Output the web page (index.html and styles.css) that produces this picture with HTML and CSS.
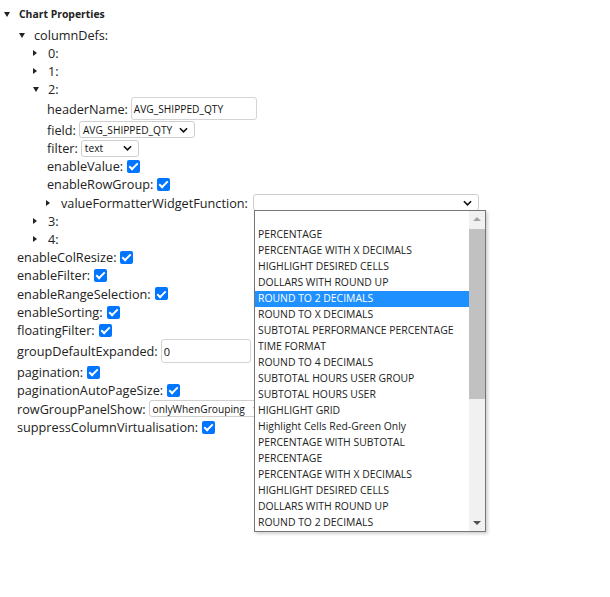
FILE: index.html
```html
<!DOCTYPE html>
<html>
<head>
<meta charset="utf-8">
<link rel="stylesheet" href="styles.css">
</head>
<body>
<div class="tree">
  <div class="row header l0"><span class="tri down"></span><span class="title">Chart Properties</span></div>
  <div class="row gap l1"><span class="tri down"></span>columnDefs:</div>
  <div class="row l2"><span class="tri right"></span>0:</div>
  <div class="row l2"><span class="tri right"></span>1:</div>
  <div class="row l2"><span class="tri down"></span>2:</div>
  <div class="row tall l3">headerName:<span class="input w-header">AVG_SHIPPED_QTY</span></div>
  <div class="row sel l3">field:<span class="select w-field"><span>AVG_SHIPPED_QTY</span><svg class="chev" viewBox="0 0 10 6"><path d="M1 1l4 4 4-4" /></svg></span></div>
  <div class="row l3">filter:<span class="select w-filter"><span>text</span><svg class="chev" viewBox="0 0 10 6"><path d="M1 1l4 4 4-4" /></svg></span></div>
  <div class="row l3">enableValue:<span class="cb"></span></div>
  <div class="row l3">enableRowGroup:<span class="cb"></span></div>
  <div class="row sel l3b"><span class="tri right"></span>valueFormatterWidgetFunction:<span class="select w-vf"><span></span><svg class="chev" viewBox="0 0 10 6"><path d="M1 1l4 4 4-4" /></svg></span></div>
  <div class="row l2"><span class="tri right"></span>3:</div>
  <div class="row l2"><span class="tri right"></span>4:</div>
  <div class="row top">enableColResize:<span class="cb"></span></div>
  <div class="row top">enableFilter:<span class="cb"></span></div>
  <div class="row sel top">enableRangeSelection:<span class="cb"></span></div>
  <div class="row top">enableSorting:<span class="cb"></span></div>
  <div class="row top">floatingFilter:<span class="cb"></span></div>
  <div class="row taller top">groupDefaultExpanded:<span class="input w-gde">0</span></div>
  <div class="row top">pagination:<span class="cb"></span></div>
  <div class="row top">paginationAutoPageSize:<span class="cb"></span></div>
  <div class="row sel top">rowGroupPanelShow:<span class="select w-rg"><span>onlyWhenGrouping</span><svg class="chev" viewBox="0 0 10 6"><path d="M1 1l4 4 4-4" /></svg></span></div>
  <div class="row top">suppressColumnVirtualisation:<span class="cb"></span></div>
</div>

<div class="dropdown">
  <ul class="options">
    <li>&nbsp;</li>
    <li>PERCENTAGE</li>
    <li>PERCENTAGE WITH X DECIMALS</li>
    <li>HIGHLIGHT DESIRED CELLS</li>
    <li>DOLLARS WITH ROUND UP</li>
    <li class="active">ROUND TO 2 DECIMALS</li>
    <li>ROUND TO X DECIMALS</li>
    <li>SUBTOTAL PERFORMANCE PERCENTAGE</li>
    <li>TIME FORMAT</li>
    <li>ROUND TO 4 DECIMALS</li>
    <li>SUBTOTAL HOURS USER GROUP</li>
    <li>SUBTOTAL HOURS USER</li>
    <li>HIGHLIGHT GRID</li>
    <li>Highlight Cells Red-Green Only</li>
    <li>PERCENTAGE WITH SUBTOTAL</li>
    <li>PERCENTAGE</li>
    <li>PERCENTAGE WITH X DECIMALS</li>
    <li>HIGHLIGHT DESIRED CELLS</li>
    <li>DOLLARS WITH ROUND UP</li>
    <li>ROUND TO 2 DECIMALS</li>
  </ul>
  <div class="scrollbar">
    <span class="arrow up"></span>
    <span class="thumb"></span>
    <span class="arrow dn"></span>
  </div>
</div>
</body>
</html>
```
FILE: styles.css
```css
html, body {
  margin: 0;
  background: #fff;
}
body {
  font-family: "Open Sans", "Noto Sans", sans-serif;
  font-size: 12.7px;
  color: #222;
  width: 610px;
  height: 597px;
  position: relative;
  overflow: hidden;
}
.tree {
  padding-top: 5px;
  display: flex;
  flex-direction: column;
}
.row {
  height: 18px;
  display: flex;
  align-items: center;
  white-space: nowrap;
}
.row.sel { height: 19px; }
.row.tall { height: 23px; margin-top: -1px; }
.row.taller { height: 24px; }
.row.gap { margin-top: 3px; }

.l0 { padding-left: 4px; }
.l1 { padding-left: 19px; }
.l2 { padding-left: 33px; }
.l3 { padding-left: 47px; }
.l3b { padding-left: 46px; }
.top { padding-left: 17px; }

.title {
  font-weight: bold;
  font-size: 10.4px;
}
.tri {
  display: inline-block;
  width: 0;
  height: 0;
}
.tri.down {
  border-left: 3px solid transparent;
  border-right: 3px solid transparent;
  border-top: 5px solid #222;
  margin-right: 9px;
}
.tri.right {
  border-top: 3.5px solid transparent;
  border-bottom: 3.5px solid transparent;
  border-left: 4px solid #222;
  margin-right: 11px;
}

.input {
  box-sizing: border-box;
  height: 23px;
  border: 1px solid #d4d4d4;
  border-radius: 3px;
  margin-left: 3px;
  padding-left: 2px;
  font-size: 10.2px;
  display: flex;
  align-items: center;
  color: #111;
}
.w-header { width: 126px; }
.w-gde { width: 90px; height: 24px; font-size: 11px; }

.select {
  box-sizing: border-box;
  height: 17px;
  border: 1px solid #cfcfcf;
  border-radius: 3px;
  margin-left: 3px;
  padding: 0 6px 0 3px;
  font-size: 10.2px;
  display: inline-flex;
  align-items: center;
  justify-content: space-between;
  color: #111;
}
.w-field { width: 116px; }
.w-filter { width: 58px; }
.w-vf { width: 226px; margin-left: 5px; }
.w-rg { width: 120px; }
.chev {
  width: 9px;
  height: 6px;
  fill: none;
  stroke: #111;
  stroke-width: 1.8;
}

.cb {
  display: inline-block;
  width: 13px;
  height: 13px;
  margin-left: 4px;
  border-radius: 2px;
  background: #0075ff;
  position: relative;
}
.cb::after {
  content: "";
  position: absolute;
  left: 4px;
  top: 1.5px;
  width: 3px;
  height: 7px;
  border: solid #fff;
  border-width: 0 2px 2px 0;
  transform: rotate(45deg);
}

.dropdown {
  position: absolute;
  left: 254px;
  top: 210px;
  width: 232px;
  height: 322px;
  box-sizing: border-box;
  border: 1px solid #767676;
  background: #fff;
  box-shadow: 2px 2px 3px rgba(0,0,0,0.18);
  display: flex;
}
.options {
  list-style: none;
  margin: 0;
  padding: 0;
  flex: 1;
  font-size: 10.4px;
  color: #222;
}
.options li {
  height: 16px;
  line-height: 15px;
  padding-left: 3px;
  white-space: nowrap;
}
.options li.active {
  background: #1e90ff;
  color: #fff;
}
.scrollbar {
  width: 16px;
  background: #f1f1f1;
  position: relative;
  display: flex;
  flex-direction: column;
  align-items: center;
}
.thumb {
  width: 16px;
  height: 170px;
  background: #c1c1c1;
  margin-top: 18px;
}
.arrow {
  position: absolute;
  width: 0;
  height: 0;
  border-left: 4px solid transparent;
  border-right: 4px solid transparent;
}
.arrow.up {
  top: 6px;
  border-bottom: 4px solid #a3a3a3;
}
.arrow.dn {
  bottom: 6px;
  border-top: 4px solid #505050;
}
```
